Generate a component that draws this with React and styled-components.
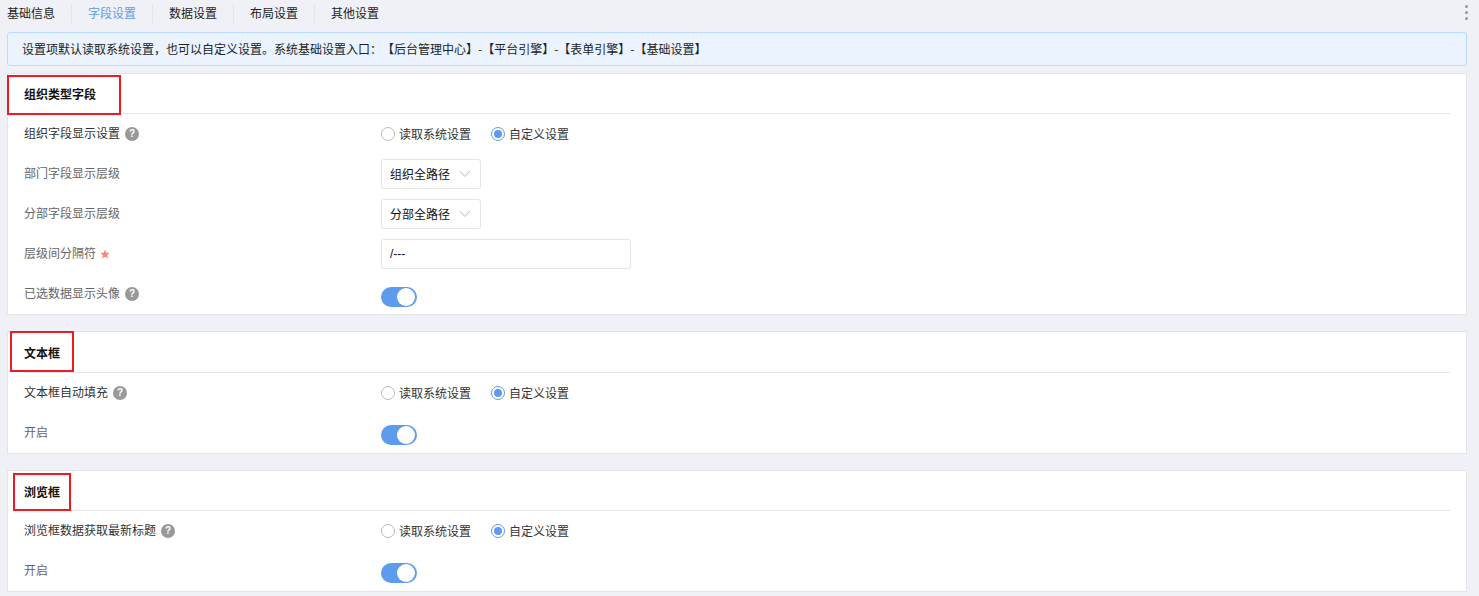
import React from 'react'
import styled, { createGlobalStyle } from 'styled-components'

const GlobalStyle = createGlobalStyle`
  html, body {
    margin: 0;
    padding: 0;
    background: #f0f1f6;
    font-family: "Noto Sans CJK SC", "Liberation Sans", sans-serif;
    font-size: 12px;
    line-height: 20px;
    text-spacing-trim: space-all;
    overflow: hidden;
  }
`

const Page = styled.div`
  width: 1479px;
  height: 596px;
  box-sizing: border-box;
  padding: 0 12px 0 7px;
  overflow: hidden;
`

const TabBar = styled.div`
  display: flex;
  align-items: center;
  height: 26px;
  margin-bottom: 6px;
  position: relative;
`

const Tab = styled.div`
  color: ${(p) => (p.$active ? '#5d9cec' : '#222')};
  line-height: 24px;
  padding: 0 16px;
  border-right: 1px solid ${(p) => (p.$last ? 'transparent' : '#e3e4e9')};
  height: 19px;
  display: flex;
  align-items: center;

  &:first-child {
    padding-left: 0;
  }
`

const More = styled.div`
  position: absolute;
  right: -1px;
  top: 5px;
  display: flex;
  flex-direction: column;
  gap: 3px;

  span {
    width: 3px;
    height: 3px;
    background: #999;
    border-radius: 50%;
  }
`

const Notice = styled.div`
  height: 34px;
  box-sizing: border-box;
  line-height: 31px;
  padding-left: 14px;
  margin-bottom: 7px;
  color: #222;
  background: #eaf3fe;
  border: 1px solid #bcdaff;
  border-radius: 3px;
`

const Card = styled.section`
  background: #fff;
  border: 1px solid #e5e5e5;
  padding: 0 16px;
  margin-bottom: ${(p) => p.$gap}px;
  position: relative;
`

const Title = styled.h3`
  margin: 0;
  height: ${(p) => p.$height}px;
  line-height: ${(p) => p.$height + (p.$lift ? 0 : 2)}px;
  font-size: 12px;
  font-weight: 700;
  color: #111;
  border-bottom: 1px solid #e5e5e5;
`

const Row = styled.div`
  display: flex;
  align-items: center;
  height: 40px;
`

const Label = styled.div`
  width: 357px;
  flex: none;
  display: flex;
  align-items: center;
  gap: 5px;
  margin-top: -2px;
  color: ${(p) => (p.$dark ? '#333' : '#666')};
`

const Help = styled.span`
  width: 14px;
  height: 14px;
  border-radius: 50%;
  background: #999;
  color: #fff;
  font-family: "Liberation Sans", sans-serif;
  font-size: 10px;
  font-weight: 700;
  line-height: 14px;
  text-align: center;
  margin-top: 2px;
`

const Star = styled.svg`
  width: 10px;
  height: 10px;
  margin: 1px 0 0 -1px;
  fill: #f58b75;
`

const RadioGroup = styled.div`
  display: flex;
  align-items: center;
  gap: 20px;
`

const RadioItem = styled.div`
  display: flex;
  align-items: center;
  gap: 4px;
  color: #333;
`

const RadioDot = styled.span`
  width: 14px;
  height: 14px;
  box-sizing: border-box;
  border-radius: 50%;
  background: #fff;
  border: 1px solid ${(p) => (p.$on ? '#5d9cec' : '#bbb')};
  display: flex;
  align-items: center;
  justify-content: center;

  &::after {
    content: '';
    width: 8px;
    height: 8px;
    border-radius: 50%;
    background: ${(p) => (p.$on ? '#5d9cec' : 'transparent')};
  }
`

const Select = styled.div`
  width: 100px;
  height: 30px;
  box-sizing: border-box;
  border: 1px solid #e5e5e5;
  border-radius: 3px;
  padding: 0 9px 0 8px;
  display: flex;
  align-items: center;
  justify-content: space-between;
  color: #111;
`

const Input = styled.div`
  width: 250px;
  height: 30px;
  box-sizing: border-box;
  border: 1px solid #e5e5e5;
  border-radius: 3px;
  padding: 0 8px;
  font-family: "Liberation Sans", sans-serif;
  line-height: 28px;
  color: #111;
`

const Switch = styled.div`
  width: 36px;
  height: 20px;
  border-radius: 10px;
  background: #5d9cec;
  position: relative;
  margin-top: ${(p) => p.$drop}px;

  &::after {
    content: '';
    position: absolute;
    right: 2px;
    top: 1px;
    width: 18px;
    height: 18px;
    border-radius: 50%;
    background: #fff;
  }
`

const Marker = styled.div`
  position: absolute;
  left: ${(p) => p.$left}px;
  top: ${(p) => p.$top}px;
  width: ${(p) => p.$width}px;
  height: ${(p) => p.$height}px;
  box-sizing: border-box;
  border: 2px solid #ed1c24;
  pointer-events: none;
`

const Chevron = () => (
  <svg width="12" height="8" viewBox="0 0 12 8" fill="none" stroke="#bbb" strokeWidth="1">
    <path d="M1 1 L6 6.5 L11 1" />
  </svg>
)

const RequiredStar = () => (
  <Star viewBox="0 0 24 24">
    <path d="M12 1 L15 9 L23 9.5 L17 15 L19 23 L12 18.5 L5 23 L7 15 L1 9.5 L9 9 Z" />
  </Star>
)

const SourceRadios = () => (
  <RadioGroup>
    <RadioItem><RadioDot />读取系统设置</RadioItem>
    <RadioItem><RadioDot $on />自定义设置</RadioItem>
  </RadioGroup>
)

export default function App() {
  return (
    <Page>
      <GlobalStyle />
      <TabBar>
        <Tab>基础信息</Tab>
        <Tab $active>字段设置</Tab>
        <Tab>数据设置</Tab>
        <Tab>布局设置</Tab>
        <Tab $last>其他设置</Tab>
        <More><span /><span /><span /></More>
      </TabBar>
      <Notice>设置项默认读取系统设置，也可以自定义设置。系统基础设置入口：【后台管理中心】-【平台引擎】-【表单引擎】-【基础设置】</Notice>

      <Card $gap={16}>
        <Marker $left={-1} $top={1} $width={114} $height={40} />
        <Title $height={39} $lift>组织类型字段</Title>
        <Row><Label $dark>组织字段显示设置<Help>?</Help></Label><SourceRadios /></Row>
        <Row>
          <Label>部门字段显示层级</Label>
          <Select>组织全路径<Chevron /></Select>
        </Row>
        <Row>
          <Label>分部字段显示层级</Label>
          <Select>分部全路径<Chevron /></Select>
        </Row>
        <Row>
          <Label>层级间分隔符<RequiredStar /></Label>
          <Input>/---</Input>
        </Row>
        <Row>
          <Label>已选数据显示头像<Help>?</Help></Label>
          <Switch $drop={6} />
        </Row>
      </Card>

      <Card $gap={16}>
        <Marker $left={2} $top={-1} $width={64} $height={41} />
        <Title $height={40}>文本框</Title>
        <Row><Label $dark>文本框自动填充<Help>?</Help></Label><SourceRadios /></Row>
        <Row>
          <Label>开启</Label>
          <Switch $drop={4} />
        </Row>
      </Card>

      <Card $gap={0}>
        <Marker $left={5} $top={2} $width={58} $height={38} />
        <Title $height={39}>浏览框</Title>
        <Row><Label $dark>浏览框数据获取最新标题<Help>?</Help></Label><SourceRadios /></Row>
        <Row>
          <Label>开启</Label>
          <Switch $drop={4} />
        </Row>
      </Card>
    </Page>
  )
}
